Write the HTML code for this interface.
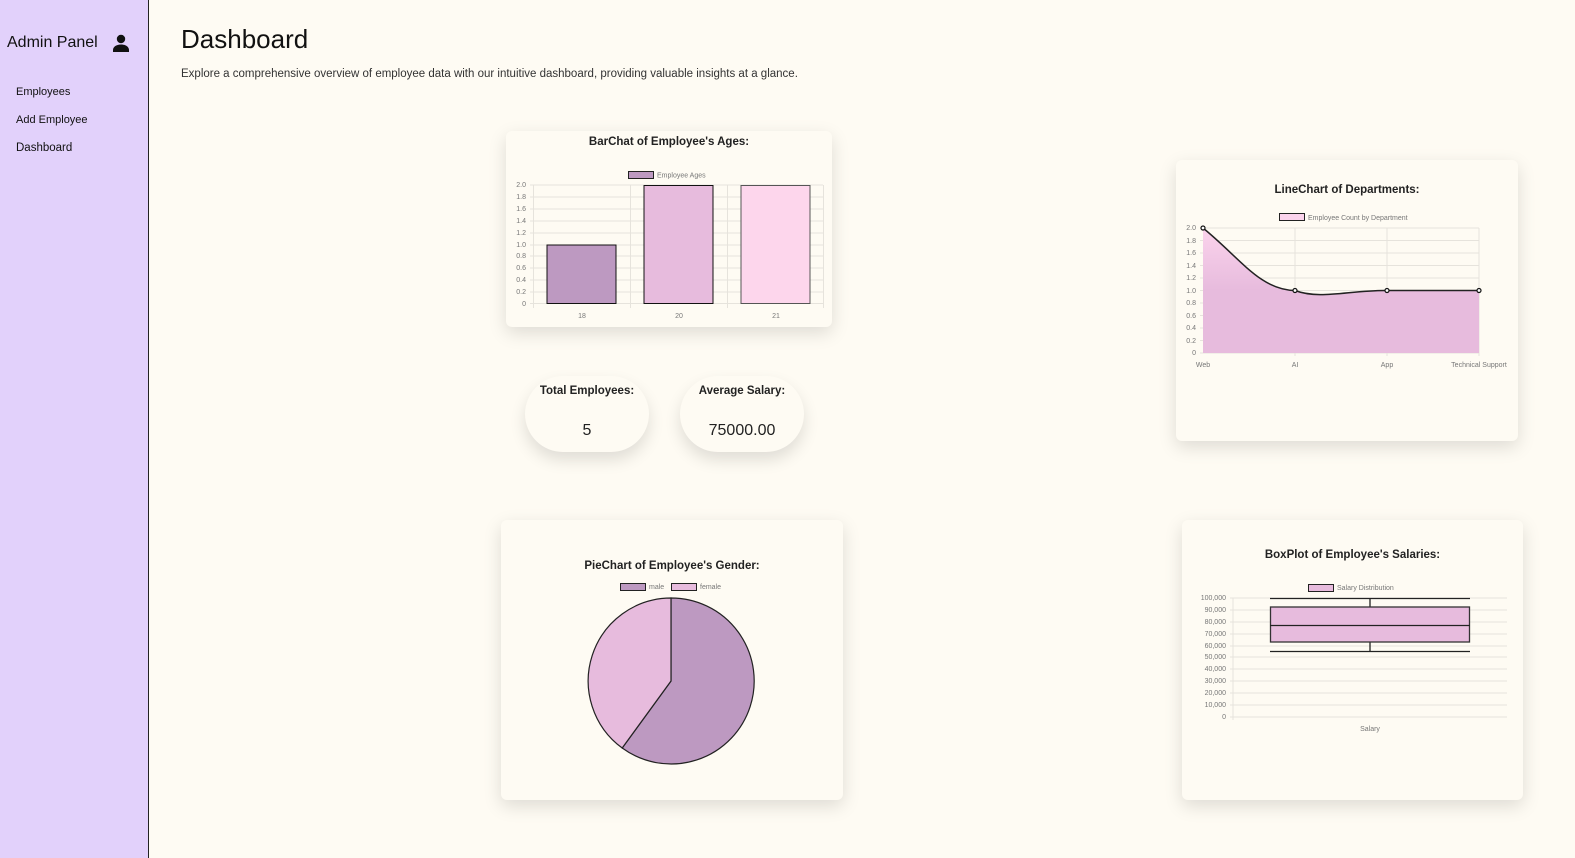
<!DOCTYPE html>
<html><head><meta charset="utf-8"><style>
*{margin:0;padding:0;box-sizing:border-box}
body{width:1575px;height:858px;background:#fefbf3;font-family:"Liberation Sans",sans-serif;color:#111;position:relative;overflow:hidden}
.side{position:absolute;left:0;top:0;width:149px;height:858px;background:#e2d1fb;border-right:1.5px solid #222}
.side h2{position:absolute;left:7px;top:34px;font-size:16px;font-weight:normal}
.side a{position:absolute;left:16px;font-size:11px;color:#111;text-decoration:none}
h1{position:absolute;left:181px;top:24px;font-size:26px;font-weight:normal}
.sub{position:absolute;left:181px;top:68px;font-size:11.5px;color:#333}
.card{position:absolute;background:#fefbf3;border-radius:6px;box-shadow:0 6px 18px rgba(0,0,0,.13)}
.t{position:absolute;width:100%;text-align:center;font-size:11.5px;font-weight:bold;color:#222}
.pill{position:absolute;width:124px;height:76px;border-radius:38px;background:#fefbf3;box-shadow:0 8px 16px rgba(0,0,0,.12);text-align:center}
.pill b{display:block;font-size:11.5px;margin-top:9px;color:#222}
.pill span{display:block;font-size:16px;margin-top:25px;color:#222}
svg text{font-family:"Liberation Sans",sans-serif;fill:#777}
</style></head><body>
<div class="side">
<h2>Admin Panel</h2>
<svg style="position:absolute;left:112px;top:34px" width="18" height="18" viewBox="0 0 18 18"><circle cx="9" cy="5" r="4.2" fill="#111"/><path d="M1 18v-2c0-3 3-5.5 8-5.5s8 2.5 8 5.5v2z" fill="#111"/></svg>
<a style="top:86px">Employees</a>
<a style="top:114px">Add Employee</a>
<a style="top:142px;font-size:11.5px">Dashboard</a>
</div>
<h1>Dashboard</h1>
<div class="sub">Explore a comprehensive overview of employee data with our intuitive dashboard, providing valuable insights at a glance.</div>

<div class="card" style="left:506px;top:131px;width:326px;height:196px"><div class="t" style="top:5px">BarChat of Employee's Ages:</div></div>
<svg style="position:absolute;left:0;top:0" width="1575" height="858">
<g font-size="7">
<rect x="628.5" y="171.5" width="25" height="7" fill="#bd99c1" stroke="#222"/>
<text x="657" y="177.5">Employee Ages</text>
<g stroke="#e6e3dc" stroke-width="1">
<line x1="530" x2="823" y1="185" y2="185"/><line x1="530" x2="823" y1="197" y2="197"/><line x1="530" x2="823" y1="209" y2="209"/><line x1="530" x2="823" y1="221" y2="221"/><line x1="530" x2="823" y1="233" y2="233"/><line x1="530" x2="823" y1="245" y2="245"/><line x1="530" x2="823" y1="256" y2="256"/><line x1="530" x2="823" y1="268" y2="268"/><line x1="530" x2="823" y1="280" y2="280"/><line x1="530" x2="823" y1="292" y2="292"/><line x1="530" x2="823" y1="303.5" y2="303.5"/>
<line x1="533.5" x2="533.5" y1="185" y2="308"/><line x1="630.5" x2="630.5" y1="185" y2="308"/><line x1="727.5" x2="727.5" y1="185" y2="308"/><line x1="823.5" x2="823.5" y1="185" y2="308"/>
</g>
<g text-anchor="end"><text x="526" y="187">2.0</text><text x="526" y="199">1.8</text><text x="526" y="211">1.6</text><text x="526" y="223">1.4</text><text x="526" y="235">1.2</text><text x="526" y="247">1.0</text><text x="526" y="258">0.8</text><text x="526" y="270">0.6</text><text x="526" y="282">0.4</text><text x="526" y="294">0.2</text><text x="526" y="306">0</text></g>
<rect x="547" y="245" width="69" height="58.5" fill="#bd99c1" stroke="#111"/>
<rect x="644" y="185.5" width="69" height="118" fill="#e7bbdd" stroke="#111"/>
<rect x="741" y="185.5" width="69" height="118" fill="#fdd6ec" stroke="#555"/>
<g text-anchor="middle"><text x="582" y="318">18</text><text x="679" y="318">20</text><text x="776" y="318">21</text></g>
</g>
</svg>

<div class="pill" style="left:525px;top:376px"><b>Total Employees:</b><span>5</span></div>
<div class="pill" style="left:680px;top:376px"><b>Average Salary:</b><span>75000.00</span></div>

<div class="card" style="left:1176px;top:160px;width:342px;height:281px"><div class="t" style="top:24px">LineChart of Departments:</div></div>
<div class="card" style="left:501px;top:520px;width:342px;height:280px"><div class="t" style="top:40px">PieChart of Employee's Gender:</div></div>
<div class="card" style="left:1182px;top:520px;width:341px;height:280px"><div class="t" style="top:29px">BoxPlot of Employee's Salaries:</div></div>

<svg style="position:absolute;left:0;top:0" width="1575" height="858">
<defs><linearGradient id="g" x1="0" y1="0" x2="0" y2="1"><stop offset="0" stop-color="#fbd3ec"/><stop offset=".5" stop-color="#e7bbdd"/></linearGradient></defs>
<g font-size="7">
<rect x="1279.5" y="213.5" width="25" height="7" fill="#fbd3ec" stroke="#222"/>
<text x="1308" y="220">Employee Count by Department</text>
<g stroke="#e6e3dc"><line x1="1200" x2="1479" y1="228" y2="228"/><line x1="1200" x2="1479" y1="240.5" y2="240.5"/><line x1="1200" x2="1479" y1="253" y2="253"/><line x1="1200" x2="1479" y1="265.5" y2="265.5"/><line x1="1200" x2="1479" y1="278" y2="278"/><line x1="1200" x2="1479" y1="290.5" y2="290.5"/><line x1="1200" x2="1479" y1="303" y2="303"/><line x1="1200" x2="1479" y1="315.5" y2="315.5"/><line x1="1200" x2="1479" y1="328" y2="328"/><line x1="1200" x2="1479" y1="340.5" y2="340.5"/><line x1="1200" x2="1479" y1="353" y2="353"/>
<line x1="1295" x2="1295" y1="228" y2="356"/><line x1="1387" x2="1387" y1="228" y2="356"/><line x1="1479" x2="1479" y1="228" y2="356"/></g>
<g text-anchor="end"><text x="1196" y="230">2.0</text><text x="1196" y="243">1.8</text><text x="1196" y="255">1.6</text><text x="1196" y="268">1.4</text><text x="1196" y="280">1.2</text><text x="1196" y="293">1.0</text><text x="1196" y="305">0.8</text><text x="1196" y="318">0.6</text><text x="1196" y="330">0.4</text><text x="1196" y="343">0.2</text><text x="1196" y="355">0</text></g>
<path d="M1203 228C1240 258 1260 290 1295 290.5C1320 300 1350 290 1387 290.5L1479 290.5L1479 353L1203 353Z" fill="url(#g)"/>
<path d="M1203 228C1240 258 1260 290 1295 290.5C1320 300 1350 290 1387 290.5L1479 290.5" fill="none" stroke="#222" stroke-width="1.5"/>
<g fill="#fff" stroke="#111" stroke-width="1.2"><circle cx="1203" cy="228" r="2"/><circle cx="1295" cy="290.5" r="2"/><circle cx="1387" cy="290.5" r="2"/><circle cx="1479" cy="290.5" r="2"/></g>
<g text-anchor="middle"><text x="1203" y="367">Web</text><text x="1295" y="367">AI</text><text x="1387" y="367">App</text><text x="1479" y="367">Technical Support</text></g>
<rect x="620.5" y="583.5" width="25" height="7" fill="#bd99c1" stroke="#222"/><text x="649" y="589">male</text>
<rect x="671.5" y="583.5" width="25" height="7" fill="#e7bbdd" stroke="#222"/><text x="700" y="589">female</text>
<path d="M671 681L671 598A83 83 0 1 1 622.2 748Z" fill="#bd99c1" stroke="#222" stroke-width="1.2"/>
<path d="M671 681L622.2 748A83 83 0 0 1 671 598Z" fill="#e7bbdd" stroke="#222" stroke-width="1.2"/>
<rect x="1308.5" y="584.5" width="25" height="7" fill="#e7bbdd" stroke="#222"/><text x="1337" y="590">Salary Distribution</text>
<g stroke="#e6e3dc"><line x1="1230" x2="1507" y1="598" y2="598"/><line x1="1230" x2="1507" y1="610" y2="610"/><line x1="1230" x2="1507" y1="622" y2="622"/><line x1="1230" x2="1507" y1="634" y2="634"/><line x1="1230" x2="1507" y1="646" y2="646"/><line x1="1230" x2="1507" y1="657" y2="657"/><line x1="1230" x2="1507" y1="669" y2="669"/><line x1="1230" x2="1507" y1="681" y2="681"/><line x1="1230" x2="1507" y1="693" y2="693"/><line x1="1230" x2="1507" y1="705" y2="705"/><line x1="1230" x2="1507" y1="717" y2="717"/><line x1="1233" x2="1233" y1="598" y2="720"/></g>
<g text-anchor="end"><text x="1226" y="600">100,000</text><text x="1226" y="612">90,000</text><text x="1226" y="624">80,000</text><text x="1226" y="636">70,000</text><text x="1226" y="648">60,000</text><text x="1226" y="659">50,000</text><text x="1226" y="671">40,000</text><text x="1226" y="683">30,000</text><text x="1226" y="695">20,000</text><text x="1226" y="707">10,000</text><text x="1226" y="719">0</text></g>
<g stroke="#222" stroke-width="1.3"><line x1="1270" x2="1470" y1="598.5" y2="598.5"/><line x1="1270" x2="1470" y1="651.5" y2="651.5"/><line x1="1370" x2="1370" y1="598" y2="651"/></g>
<rect x="1270.5" y="607" width="199" height="35" fill="#e7bbdd" stroke="#333" stroke-width="1.3"/>
<line x1="1270" x2="1470" y1="625.5" y2="625.5" stroke="#222" stroke-width="1.3"/>
<text x="1370" y="731" text-anchor="middle">Salary</text>
</g>
</svg>
</body></html>
